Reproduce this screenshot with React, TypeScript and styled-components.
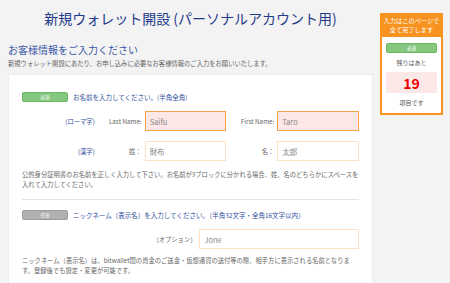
import React from "react";
import styled, { createGlobalStyle } from "styled-components";

const GlobalStyle = createGlobalStyle`
  body {
    margin: 0;
    background: #f3f3f3;
    font-family: "Noto Sans CJK JP", "Noto Sans", sans-serif;
    color: #555;
  }
`;

const Page = styled.div`
  display: flex;
  align-items: flex-start;
  gap: 7px;
  padding: 0 7px 0 8px;
`;

const Main = styled.div`
  width: 365px;
`;

const Title = styled.h1`
  margin: 9px 0 0;
  font-size: 14px;
  line-height: 18px;
  font-weight: normal;
  color: #1f3a8a;
  text-align: center;
`;

const Heading = styled.h2`
  margin: 16px 0 0;
  font-size: 10px;
  line-height: 13px;
  font-weight: normal;
  color: #3a58a6;
`;

const Lead = styled.p`
  margin: 3px 0 0;
  font-size: 6.3px;
  line-height: 9px;
  color: #666;
`;

const Card = styled.div`
  margin-top: 6px;
  background: #fff;
  border: 1px solid #ececec;
  padding: 16px 13px 20px 13px;
`;

const Section = styled.div`
  display: flex;
  flex-direction: column;
`;

const SectionHead = styled.div`
  display: flex;
  align-items: center;
  gap: 5px;
  height: 11px;
`;

const Badge = styled.span<{ $tone: "green" | "gray" }>`
  display: inline-flex;
  align-items: center;
  justify-content: center;
  width: 46px;
  height: 10px;
  box-sizing: border-box;
  border-radius: 2px;
  font-size: 4.5px;
  color: #fff;
  background: ${(p) => (p.$tone === "green" ? "#84c77f" : "#b0b0b0")};
  border: 1px solid ${(p) => (p.$tone === "green" ? "#6bb766" : "#9c9c9c")};
`;

const HeadText = styled.span`
  font-size: 6.5px;
  color: #2f4f9e;
`;

const Row = styled.div<{ $top: number }>`
  display: flex;
  align-items: center;
  margin-top: ${(p) => p.$top}px;
`;

const Kind = styled.span`
  width: 73px;
  padding-right: 2px;
  text-align: right;
  font-size: 6.3px;
  color: #2f4f9e;
`;

const FieldLabel = styled.span<{ $w: number }>`
  width: ${(p) => p.$w}px;
  padding-right: 3px;
  box-sizing: border-box;
  text-align: right;
  font-size: 6.3px;
  color: #666;
`;

const Input = styled.div<{ $w: number; $active?: boolean }>`
  width: ${(p) => p.$w}px;
  height: 20px;
  box-sizing: border-box;
  display: flex;
  align-items: center;
  padding-left: 4px;
  font-size: 7.5px;
  color: #888;
  background: ${(p) => (p.$active ? "#fde7e7" : "#fff")};
  border: ${(p) => (p.$active ? "1.5px solid #f6a04a" : "1.5px solid #fde0c0")};
`;

const Note = styled.p<{ $top: number }>`
  margin: ${(p) => p.$top}px 0 0;
  font-size: 6.3px;
  line-height: 10px;
  color: #666;
`;

const Divider = styled.hr`
  margin: 9px 0 9px;
  border: none;
  border-top: 1px solid #e2e2e2;
`;

const Side = styled.div`
  width: 63px;
  margin-top: 13px;
  box-sizing: border-box;
  border: 2px solid #f7931e;
  background: #fff;
`;

const SideHead = styled.div`
  background: #f7931e;
  color: #fff;
  font-size: 6.2px;
  line-height: 8.5px;
  text-align: center;
  padding: 2px 0 3px;
`;

const SideBody = styled.div`
  display: flex;
  flex-direction: column;
  align-items: center;
  padding: 6px 4px 6px;
`;

const SideText = styled.span<{ $top: number }>`
  margin-top: ${(p) => p.$top}px;
  font-size: 6px;
  line-height: 8px;
  color: #555;
`;

const Count = styled.div`
  margin-top: 5px;
  width: 100%;
  height: 21px;
  background: #fde8e8;
  display: flex;
  align-items: center;
  justify-content: center;
  font-size: 14px;
  font-weight: bold;
  color: #f00000;
`;

const SideBadge = styled(Badge)`
  width: 100%;
`;

export default function App() {
  return (
    <>
      <GlobalStyle />
      <Page>
        <Main>
          <Title>新規ウォレット開設 (パーソナルアカウント用)</Title>
          <Heading>お客様情報をご入力ください</Heading>
          <Lead>
            新規ウォレット開設にあたり、お申し込みに必要なお客様情報のご入力をお願いいたします。
          </Lead>
          <Card>
            <Section>
              <SectionHead>
                <Badge $tone="green">必須</Badge>
                <HeadText>お名前を入力してください。(半角全角)</HeadText>
              </SectionHead>
              <Row $top={9}>
                <Kind>(ローマ字)</Kind>
                <FieldLabel $w={48}>Last Name:</FieldLabel>
                <Input $w={82} $active>Saifu</Input>
                <FieldLabel $w={51}>First Name:</FieldLabel>
                <Input $w={82} $active>Taro</Input>
              </Row>
              <Row $top={10}>
                <Kind>(漢字)</Kind>
                <FieldLabel $w={48}>姓：</FieldLabel>
                <Input $w={82}>財布</Input>
                <FieldLabel $w={51}>名：</FieldLabel>
                <Input $w={82}>太郎</Input>
              </Row>
              <Note $top={9}>
                公的身分証明書のお名前を正しく入力して下さい。お名前が3ブロックに分かれる場合、姓、名のどちらかにスペースを入れて入力してください。
              </Note>
            </Section>
            <Divider />
            <Section>
              <SectionHead>
                <Badge $tone="gray">任意</Badge>
                <HeadText>ニックネーム（表示名）を入力してください。（半角32文字・全角16文字以内）</HeadText>
              </SectionHead>
              <Row $top={9}>
                <FieldLabel $w={178}>（オプション）</FieldLabel>
                <Input $w={160}>Jone</Input>
              </Row>
              <Note $top={7}>
                ニックネーム（表示名）は、bitwallet間の資金のご送金・仮想通貨の送付等の際、相手方に表示される名前となります。登録後でも設定・変更が可能です。
              </Note>
            </Section>
          </Card>
        </Main>
        <Side>
          <SideHead>
            入力はこのページで
            <br />
            全て完了します
          </SideHead>
          <SideBody>
            <SideBadge $tone="green">必須</SideBadge>
            <SideText $top={6}>残りはあと</SideText>
            <Count>19</Count>
            <SideText $top={6}>項目です</SideText>
          </SideBody>
        </Side>
      </Page>
    </>
  );
}
